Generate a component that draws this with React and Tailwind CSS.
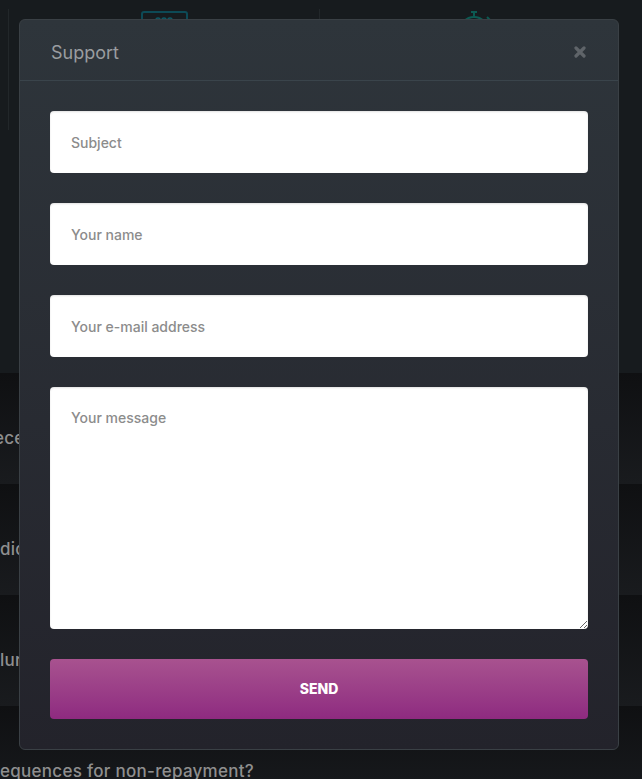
function Field({ placeholder }) {
  return (
    <input
      placeholder={placeholder}
      className="h-[62px] w-full rounded-[4px] bg-white px-[21px] text-[14px] font-medium text-[#555] shadow-[inset_0_1px_2px_rgba(0,0,0,0.12)] outline-none placeholder:text-[#8c8c8c]"
    />
  );
}

function FaqRow({ text, className = '' }) {
  return (
    <div className="flex h-[111px] shrink-0 items-center bg-gradient-to-b from-[#0f1012] to-[#191b1e] pt-[20px]">
      <span className={`whitespace-nowrap ${className}`}>{text}</span>
    </div>
  );
}

function BackgroundPage() {
  return (
    <div className="flex h-[779px] flex-col overflow-hidden bg-[#171b1e] font-['Inter',sans-serif] text-[17px] font-medium tracking-[0.28px] text-[#8f8f8f]">
      <div className="h-[373px] shrink-0 pl-[8px] pt-[9px]">
        <div className="grid h-[121px] w-[622px] grid-cols-2">
          <div className="flex justify-center border-l border-[#22272a] pt-[2px]">
            <div className="flex h-[40px] w-[47px] justify-center rounded-[3px] border-2 border-[#0d4a56]">
              <svg width="20" height="6" viewBox="0 0 20 6" fill="none" stroke="#0d5a66" strokeWidth="1.5" className="mt-[4px]">
                <circle cx="4" cy="3" r="2" />
                <circle cx="10" cy="3" r="2" />
                <circle cx="16" cy="3" r="2" />
              </svg>
            </div>
          </div>
          <div className="flex justify-center border-l border-[#22272a] pt-[2px]">
            <svg width="40" height="30" viewBox="0 0 40 30" fill="none" stroke="#0c5a52" strokeWidth="2">
              <path d="M16 1h6M19 1v5" />
              <circle cx="19" cy="20" r="14" />
              <path d="M32 6l4 4" />
            </svg>
          </div>
        </div>
      </div>
      <FaqRow text="ece" className="-ml-[6px]" />
      <FaqRow text="dic" />
      <FaqRow text="lur" />
      <div className="flex flex-1 items-end bg-gradient-to-b from-[#0f1012] to-[#16181b]">
        <span className="whitespace-nowrap leading-[16px]">equences for non-repayment?</span>
      </div>
    </div>
  );
}

export default function App() {
  return (
    <div className="relative h-[779px] w-[642px] overflow-hidden">
      <BackgroundPage />
      <div className="absolute left-[19px] top-[19px] w-[600px] rounded-[6px] border border-[#3a4045] bg-gradient-to-b from-[#2e353b] to-[#23232b] font-['Inter',sans-serif]">
        <div className="flex h-[61px] items-center justify-between border-b border-[#3a444b] pl-[31px] pr-[32px]">
          <h2 className="pt-[4px] text-[18px] font-normal text-[#9a9da0]">Support</h2>
          <svg width="12" height="12" viewBox="0 0 12 12" stroke="#5f6469" strokeWidth="3.2" strokeLinecap="round" className="mt-[4px]">
            <path d="M2 2l8 8M10 2l-8 8" />
          </svg>
        </div>
        <form className="flex flex-col gap-[30px] p-[30px]">
          <Field placeholder="Subject" />
          <Field placeholder="Your name" />
          <Field placeholder="Your e-mail address" />
          <textarea
            placeholder="Your message"
            className="block h-[242px] w-full rounded-[4px] bg-white p-[21px] text-[14px] font-medium leading-[20px] shadow-[inset_0_1px_2px_rgba(0,0,0,0.12)] outline-none placeholder:text-[#8c8c8c]"
          />
          <button type="button" className="h-[60px] w-full rounded-[4px] bg-gradient-to-b from-[#a8528f] to-[#8e2a80] pb-[2px] text-[14px] font-extrabold text-white">
            SEND
          </button>
        </form>
      </div>
    </div>
  );
}
